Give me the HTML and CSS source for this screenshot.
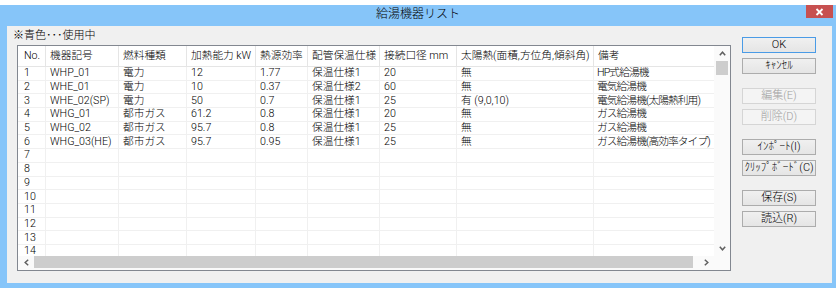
FILE: index.html
```html
<!DOCTYPE html>
<html lang="ja">

<head>
    <meta charset="UTF-8">
    <title>給湯機器リスト</title>
    <link rel="stylesheet" href="styles.css">
</head>

<body>
    <div class="window">
        <div class="titlebar">
            <span></span>
            <span class="title">給湯機器リスト</span>
            <button class="close-button">
                <svg width="9" height="8" viewBox="0 0 9 8"><path d="M1.5 1 L7.5 7 M7.5 1 L1.5 7" stroke="#fff" stroke-width="1.8"/></svg>
            </button>
        </div>
        <div class="client">
            <div class="main">
                <div class="note">※青色･･･使用中</div>
                <div class="grid-box">
                    <div class="data">
                        <table>
                            <colgroup>
                                <col style="width: 28px">
                                <col style="width: 73px">
                                <col style="width: 68px">
                                <col style="width: 69px">
                                <col style="width: 52px">
                                <col style="width: 72px">
                                <col style="width: 77px">
                                <col style="width: 137px">
                                <col style="width: 160px">
                            </colgroup>
                            <thead>
                                <tr>
                                    <th>No.</th>
                                    <th>機器記号</th>
                                    <th>燃料種類</th>
                                    <th>加熱能力 kW</th>
                                    <th>熱源効率</th>
                                    <th>配管保温仕様</th>
                                    <th>接続口径 mm</th>
                                    <th>太陽熱(面積,方位角,傾斜角)</th>
                                    <th>備考</th>
                                </tr>
                            </thead>
                            <tbody>
                                <tr><td>1</td><td>WHP_01</td><td>電力</td><td>12</td><td>1.77</td><td>保温仕様1</td><td>20</td><td>無</td><td>HP式給湯機</td></tr>
                                <tr><td>2</td><td>WHE_01</td><td>電力</td><td>10</td><td>0.37</td><td>保温仕様2</td><td>60</td><td>無</td><td>電気給湯機</td></tr>
                                <tr><td>3</td><td>WHE_02(SP)</td><td>電力</td><td>50</td><td>0.7</td><td>保温仕様1</td><td>25</td><td>有 (9,0,10)</td><td>電気給湯機(太陽熱利用)</td></tr>
                                <tr><td>4</td><td>WHG_01</td><td>都市ガス</td><td>61.2</td><td>0.8</td><td>保温仕様1</td><td>20</td><td>無</td><td>ガス給湯機</td></tr>
                                <tr><td>5</td><td>WHG_02</td><td>都市ガス</td><td>95.7</td><td>0.8</td><td>保温仕様1</td><td>25</td><td>無</td><td>ガス給湯機</td></tr>
                                <tr><td>6</td><td>WHG_03(HE)</td><td>都市ガス</td><td>95.7</td><td>0.95</td><td>保温仕様1</td><td>25</td><td>無</td><td>ガス給湯機(高効率タイプ)</td></tr>
                                <tr><td>7</td><td></td><td></td><td></td><td></td><td></td><td></td><td></td><td></td></tr>
                                <tr><td>8</td><td></td><td></td><td></td><td></td><td></td><td></td><td></td><td></td></tr>
                                <tr><td>9</td><td></td><td></td><td></td><td></td><td></td><td></td><td></td><td></td></tr>
                                <tr><td>10</td><td></td><td></td><td></td><td></td><td></td><td></td><td></td><td></td></tr>
                                <tr><td>11</td><td></td><td></td><td></td><td></td><td></td><td></td><td></td><td></td></tr>
                                <tr><td>12</td><td></td><td></td><td></td><td></td><td></td><td></td><td></td><td></td></tr>
                                <tr><td>13</td><td></td><td></td><td></td><td></td><td></td><td></td><td></td><td></td></tr>
                                <tr><td>14</td><td></td><td></td><td></td><td></td><td></td><td></td><td></td><td></td></tr>
                            </tbody>
                        </table>
                    </div>
                    <div class="vscroll">
                        <div class="arrow">
                            <svg width="7" height="5" viewBox="0 0 7 5"><path d="M0.8 4.2 L3.5 1.2 L6.2 4.2" fill="none" stroke="#606060" stroke-width="1.5"/></svg>
                        </div>
                        <div class="vthumb"></div>
                        <div class="track"></div>
                        <div class="arrow">
                            <svg width="7" height="5" viewBox="0 0 7 5"><path d="M0.8 0.8 L3.5 3.8 L6.2 0.8" fill="none" stroke="#606060" stroke-width="1.5"/></svg>
                        </div>
                    </div>
                    <div class="hscroll">
                        <div class="arrow">
                            <svg width="5" height="7" viewBox="0 0 5 7"><path d="M4.2 0.8 L1.2 3.5 L4.2 6.2" fill="none" stroke="#606060" stroke-width="1.5"/></svg>
                        </div>
                        <div class="hthumb"></div>
                        <div class="track"></div>
                        <div class="arrow">
                            <svg width="5" height="7" viewBox="0 0 5 7"><path d="M0.8 0.8 L3.8 3.5 L0.8 6.2" fill="none" stroke="#606060" stroke-width="1.5"/></svg>
                        </div>
                    </div>
                    <div class="corner"></div>
                </div>
            </div>
            <div class="buttons">
                <button class="btn default">OK</button>
                <button class="btn group-end">ｷｬﾝｾﾙ</button>
                <button class="btn" disabled>編集(E)</button>
                <button class="btn group-end" disabled>削除(D)</button>
                <button class="btn">ｲﾝﾎﾟｰﾄ(I)</button>
                <button class="btn group-end">ｸﾘｯﾌﾟﾎﾞｰﾄﾞ(C)</button>
                <button class="btn">保存(S)</button>
                <button class="btn">読込(R)</button>
            </div>
        </div>
    </div>
</body>

</html>
```

FILE: styles.css
```css
* {
    box-sizing: border-box;
}

body {
    margin: 0;
    background: #fff;
    font-family: Roboto, "Noto Sans CJK JP", sans-serif;
    font-size: 11px;
    font-weight: 300;
    color: #000;
}

.window {
    margin-top: 5px;
    height: 283px;
    background: #86c5f9;
    display: flex;
    flex-direction: column;
}

.titlebar {
    height: 21px;
    display: grid;
    grid-template-columns: 1fr auto 1fr;
    align-items: start;
}

.title {
    line-height: 18px;
    font-size: 12px;
}

.close-button {
    justify-self: end;
    margin-right: 3px;
    width: 27px;
    height: 13px;
    padding: 0;
    border: none;
    background: #c75050;
    display: flex;
    align-items: center;
    justify-content: center;
}

.client {
    flex: 1;
    margin: 0 4px 5px 7px;
    background: #f0f0f0;
    display: flex;
}

.main {
    width: 724px;
    padding-left: 6px;
}

.note {
    height: 19px;
    line-height: 19px;
}

.grid-box {
    margin-left: 4px;
    width: 714px;
    height: 226px;
    border: 1px solid #828790;
    background: #fff;
    display: grid;
    grid-template-columns: 1fr 16px;
    grid-template-rows: 1fr 14px;
}

.data {
    overflow: hidden;
}

table {
    border-collapse: separate;
    border-spacing: 0;
    table-layout: fixed;
    width: 736px;
    font-size: 10.7px;
}

th,
td {
    padding: 0 0 0 4px;
    text-align: left;
    font-weight: 300;
    white-space: nowrap;
    overflow-x: clip;
    overflow-y: visible;
    line-height: 12px;
    border-right: 1px solid #f0f0f0;
    border-bottom: 1px solid #f0f0f0;
}

th:first-child,
td:first-child {
    padding-left: 6px;
}

td:last-child {
    padding-left: 3px;
    letter-spacing: -0.9px;
}

thead tr {
    height: 21px;
}

th {
    border-color: #e5e5e5;
}

tbody tr {
    height: 13.7px;
}

.vscroll {
    grid-column: 2;
    grid-row: 1;
    display: flex;
    flex-direction: column;
    background: #fafafa;
}

.vscroll .arrow {
    height: 15px;
    display: flex;
    align-items: center;
    justify-content: center;
}

.vthumb {
    height: 14px;
    margin: 0 2px;
    background: #cdcdcd;
}

.track {
    flex: 1;
}

.hscroll {
    grid-column: 1;
    grid-row: 2;
    display: flex;
    background: #fafafa;
}

.hscroll .arrow {
    width: 16px;
    height: 12px;
    display: flex;
    align-items: center;
    justify-content: center;
}

.hthumb {
    width: 659px;
    height: 12px;
    background: #cdcdcd;
}

.corner {
    grid-column: 2;
    grid-row: 2;
    background: #fafafa;
}

.buttons {
    width: 74px;
    margin-left: 11px;
    padding-top: 11px;
    display: flex;
    flex-direction: column;
}

.btn {
    height: 16px;
    margin-bottom: 5px;
    padding: 0;
    border: 1px solid #acacac;
    background: linear-gradient(#f0f0f0, #e5e5e5);
    font-family: inherit;
    font-size: 11px;
    font-weight: 300;
    line-height: 14px;
    color: #000;
}

.btn.default {
    border-color: #4a9be6;
}

.btn.group-end {
    margin-bottom: 14px;
}

.btn:disabled {
    border-color: #d5d5d5;
    background: #f4f4f4;
    color: #a0a0a0;
}
```
